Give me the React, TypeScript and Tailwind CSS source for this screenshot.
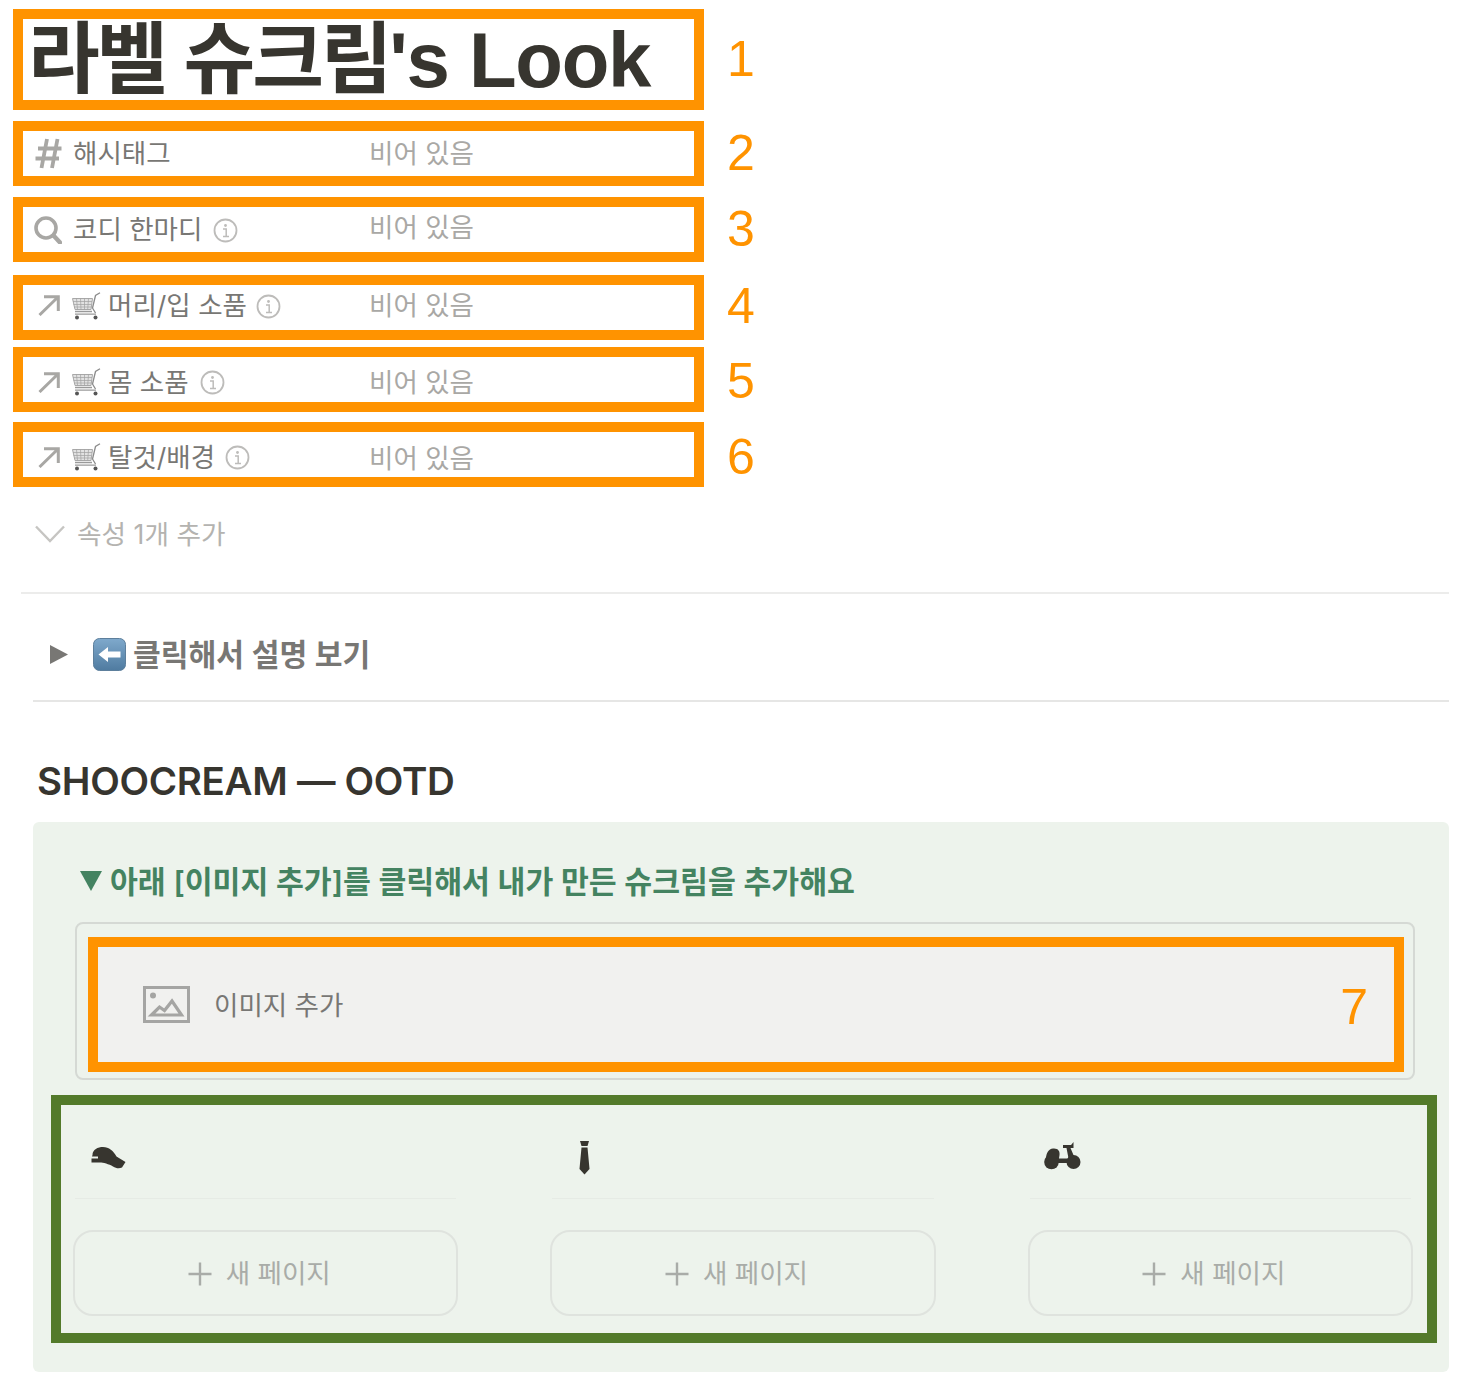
import React from "react";

const KR = "font-['Inter','Noto_Sans_CJK_KR',sans-serif]";

function Hash() {
  return (
    <svg width="27" height="31" viewBox="0 0 27 31" fill="none" stroke="#a8a7a4" strokeWidth="3.800" strokeLinecap="butt">
      <path d="M12 1 6.500 30M22.500 1 17 30M3 10.500h23.500M.5 20.500h23.500" />
    </svg>
  );
}
function Search() {
  return (
    <svg width="28" height="28" viewBox="0 0 28 28" fill="none" stroke="#a8a7a4" strokeWidth="3.600" strokeLinecap="round" className="-ml-px">
      <circle cx="12" cy="12" r="10" />
      <path d="M19.500 19.500 26 26.500" strokeWidth="4.400" />
    </svg>
  );
}
function Info() {
  return (
    <svg width="25" height="25" viewBox="0 0 25 25" fill="none" className="shrink-0">
      <circle cx="12.500" cy="12.500" r="11" stroke="#bdbcba" strokeWidth="1.800" />
      <circle cx="12.500" cy="7.500" r="1.400" fill="#bdbcba" />
      <path d="M10 11h3.200v7M10 18.500h6" stroke="#bdbcba" strokeWidth="1.500" />
    </svg>
  );
}
function Arrow() {
  return (
    <svg width="22" height="21" viewBox="0 0 22 21" fill="none" stroke="#a8a7a4" strokeWidth="3" className="ml-[3px]">
      <path d="M6 1.700h14.300V16M20 2 1.500 20" />
    </svg>
  );
}
function Cart() {
  return (
    <svg width="29" height="28" viewBox="0 0 29 28" fill="none">
      <path d="M.5 6.500h20l-1.500 11H3z" fill="#e2e2e2" stroke="#a8a8a8" strokeWidth="1" />
      <path d="M4.500 6.500l1 11M8.500 6.500l.5 11M12.500 6.500v11M16.500 6.500l-.8 11M1 9.500h19M1.500 12.500h18M2.300 15h17" stroke="#a0a0a0" strokeWidth="0.700" />
      <path d="M28 .8 23.500 3.500 20.500 16 23.500 21" stroke="#8b8b8b" strokeWidth="1.300" />
      <path d="M3 19.500h17M3 22.200h21" stroke="#9a9a9a" strokeWidth="1.300" />
      <circle cx="5" cy="25.500" r="2" fill="#555" />
      <circle cx="23.500" cy="25.500" r="2" fill="#555" />
    </svg>
  );
}
function BackEmoji() {
  return (
    <svg width="33" height="33" viewBox="0 0 33 33">
      <defs>
        <linearGradient id="bk" x1="0" y1="0" x2="0" y2="1">
          <stop offset="0" stopColor="#7fa9cc" />
          <stop offset="1" stopColor="#4f7ba0" />
        </linearGradient>
      </defs>
      <rect x="0.500" y="0.500" width="32" height="32" rx="6" fill="url(#bk)" stroke="#5d7f9c" />
      <path d="M5.500 16.500 15 9v4.500h12.500v6H15V24z" fill="#fff" />
    </svg>
  );
}
function ImageIcon() {
  return (
    <svg width="47" height="37" viewBox="0 0 47 37" fill="none">
      <rect x="1.500" y="1.500" width="44" height="34" stroke="#a5a5a3" strokeWidth="3" />
      <circle cx="10" cy="9.500" r="3" fill="#a5a5a3" />
      <path d="M8.500 29l8-8 5 3.500 7.500-9.500L38.500 29z" fill="none" stroke="#a5a5a3" strokeWidth="3.200" strokeLinejoin="miter" />
    </svg>
  );
}
function Plus() {
  return (
    <svg width="26" height="26" viewBox="0 0 26 26" stroke="#a9aca8" strokeWidth="2.400">
      <path d="M13 1.500v23M1.500 13h23" />
    </svg>
  );
}
function CapIcon() {
  return (
    <svg width="35" height="22" viewBox="0 0 35 22">
      <path d="M1.500 8C1.500 2.500 7 0 12 0c6 0 10.500 4 13.500 9.500l9 5.500-3.500 5.500c-3 1.500-6 .8-9-1-4-2.500-10-4-13-4H.5v-4H7v-2H1z" fill="#37352f" />
    </svg>
  );
}
function TieIcon() {
  return (
    <svg width="11" height="35" viewBox="0 0 11 35">
      <path d="M1 1h9L8.500 6h-6z" fill="#37352f" />
      <path d="M2.500 7.500h6L10.500 29 5.500 34.500.5 29z" fill="#37352f" />
    </svg>
  );
}
function ScooterIcon() {
  return (
    <svg width="38" height="28" viewBox="0 0 38 28">
      <circle cx="7.500" cy="20" r="7.300" fill="#37352f" />
      <circle cx="29.500" cy="20" r="7" fill="#37352f" />
      <path d="M2 17c0-6 2.500-10 7-10.500 5-.5 7 2.500 6.500 6.500l-1 7H5z" fill="#37352f" />
      <path d="M12 16.500h16v4.500H12z" fill="#37352f" />
      <path d="M19 3h8l.5-.5L29.500 0v6h-3L32 19h-7L22.500 6H19z" fill="#37352f" />
    </svg>
  );
}

function Num({ n, cls }: { n: string; cls: string }) {
  return (
    <span className={`ml-[23px] font-['Liberation_Sans',sans-serif] text-[50px] leading-none text-[#ff9300] ${cls}`}>{n}</span>
  );
}

type RowProps = {
  n: string;
  mt: string;
  pad: string;
  valuePad: string;
  numCls: string;
  infoCls?: string;
  icon: React.ReactNode;
  cart?: boolean;
  label: string;
};

function Row({ n, mt, pad, valuePad, numCls, infoCls, icon, cart, label }: RowProps) {
  return (
    <div className={`flex items-center ${mt}`}>
      <div className="flex h-[65px] w-[691px] items-center border-[10px] border-[#ff9300] pl-[12px] text-[26.500px] leading-none">
        <div className={`flex w-[334px] items-center ${pad}`}>
          <div className="flex w-[38px] shrink-0 items-center">{icon}</div>
          {cart && (
            <div className="-ml-px mr-[7px] shrink-0">
              <Cart />
            </div>
          )}
          <span className="whitespace-nowrap text-[#787774]">{label}</span>
          {infoCls && (
            <div className={infoCls}>
              <Info />
            </div>
          )}
        </div>
        <span className={`whitespace-nowrap text-[#a9a8a5] ${valuePad}`}>비어 있음</span>
      </div>
      <Num n={n} cls={numCls} />
    </div>
  );
}

function Column({ icon, pad }: { icon: React.ReactNode; pad: string }) {
  return (
    <div className="flex flex-col">
      <div className={`mx-[2px] flex h-[94px] items-center border-b border-[#e6ebe5] pt-[12px] ${pad}`}>{icon}</div>
      <div className="mt-[31px] flex h-[86px] items-center justify-center gap-[13px] rounded-[20px] border-2 border-[#dfe3de] pr-[14px] pt-[2px] text-[26.500px] text-[#a9aca8]">
        <Plus />
        <span>새 페이지</span>
      </div>
    </div>
  );
}

export default function App() {
  return (
    <div className={`h-[1396px] w-[1480px] overflow-hidden bg-white pl-[13px] pr-[31px] pt-[9px] ${KR}`}>
      <div className="flex items-center">
        <div className="flex h-[101px] w-[691px] items-center border-[10px] border-[#ff9300] pl-[5px]">
          <h1 className="whitespace-nowrap font-['Liberation_Sans','Noto_Sans_CJK_KR',sans-serif] text-[78px] font-bold leading-none text-[#37352f]">
            <span className="tracking-[-3.200px]">라벨 슈크림</span>
            <span className="tracking-[-1.300px]">'s Look</span>
          </h1>
        </div>
        <Num n="1" cls="-mt-[2px]" />
      </div>
      <Row n="2" mt="mt-[11px]" pad="" valuePad="" numCls="-mt-[2px]" icon={<Hash />} label="해시태그" />
      <Row n="3" mt="mt-[11px]" pad="" valuePad="-mt-[5px]" numCls="-mt-[2px]" infoCls="ml-[11px] mt-[2px]" icon={<Search />} label="코디 한마디" />
      <Row n="4" mt="mt-[13px]" pad="-mt-[4px]" valuePad="-mt-[5px]" numCls="-mt-[4px]" infoCls="ml-[9px] mt-[2px]" icon={<Arrow />} cart label="머리/입 소품" />
      <Row n="5" mt="mt-[7px]" pad="mt-[5px]" valuePad="mt-[5px]" numCls="mt-[2px]" infoCls="ml-[11px] mt-[1px]" icon={<Arrow />} cart label="몸 소품" />
      <Row n="6" mt="mt-[10px]" pad="mt-[5px]" valuePad="mt-[7px]" numCls="mt-[4px]" infoCls="ml-[10px] mt-[1px]" icon={<Arrow />} cart label="탈것/배경" />

      <div className="ml-[22px] mt-[31px] flex h-[32px] items-center text-[26.700px] text-[#b4b3b0]">
        <svg width="30" height="18" viewBox="0 0 30 18" fill="none" stroke="#c6c5c2" strokeWidth="2.400">
          <path d="M1 1.500 15 16 29 1.500" />
        </svg>
        <span className="ml-[12px]">속성 1개 추가</span>
      </div>

      <div className="ml-[8px] mt-[42px] h-[2px] bg-[#ececeb]" />

      <div className="ml-[37px] mt-[42px] flex h-[36px] items-center">
        <svg width="18" height="19" viewBox="0 0 18 19">
          <path d="M0 0 18 9.500 0 19z" fill="#787774" />
        </svg>
        <div className="ml-[25px]">
          <BackEmoji />
        </div>
        <span className="ml-[7px] mt-[3px] text-[30.200px] font-semibold text-[#787774]">클릭해서 설명 보기</span>
      </div>

      <div className="ml-[20px] mt-[28px] h-[2px] bg-[#e6e6e5]" />

      <h2 className="ml-[24px] mt-[57px] h-[44px] whitespace-nowrap text-[38.500px] font-semibold leading-[44px] tracking-[-0.300px] text-[#37352f]">
        SHOOCREAM — OOTD
      </h2>

      <div className="ml-[20px] mt-[19px] h-[550px] rounded-[6px] bg-[#edf3ec] pl-[18px] pr-[12px] pt-[38px]">
        <div className="ml-[29px] flex h-[42px] items-center text-[30.300px] font-semibold text-[#448361]">
          <svg width="22" height="22" viewBox="0 0 22 22">
            <path d="M0 1h22L11 21z" fill="#448361" />
          </svg>
          <span className="ml-[8px] mt-[4px] whitespace-nowrap">아래 [이미지 추가]를 클릭해서 내가 만든 슈크림을 추가해요</span>
        </div>
        <div className="ml-[24px] mr-[22px] mt-[20px] h-[158px] rounded-[8px] border-2 border-[#d5d9d4] pl-[11px] pr-[9px] pt-[13px]">
          <div className="flex h-[135px] items-center border-[10px] border-[#ff9300] bg-[#f1f1ef] pl-[45px] pr-[26px]">
            <ImageIcon />
            <span className="ml-[24px] mt-[2px] text-[26.500px] text-[#787774]">이미지 추가</span>
            <span className="ml-auto mt-[4px] font-['Liberation_Sans',sans-serif] text-[50px] leading-none text-[#ff9300]">7</span>
          </div>
        </div>
        <div className="mt-[15px] grid h-[248px] grid-cols-3 gap-x-[92px] border-[10px] border-[#537a2a] pl-[12px] pr-[14px]">
          <Column icon={<CapIcon />} pad="pl-[16px]" />
          <Column icon={<TieIcon />} pad="pl-[27px]" />
          <Column icon={<ScooterIcon />} pad="pl-[14px] pb-[4px]" />
        </div>
      </div>
    </div>
  );
}
